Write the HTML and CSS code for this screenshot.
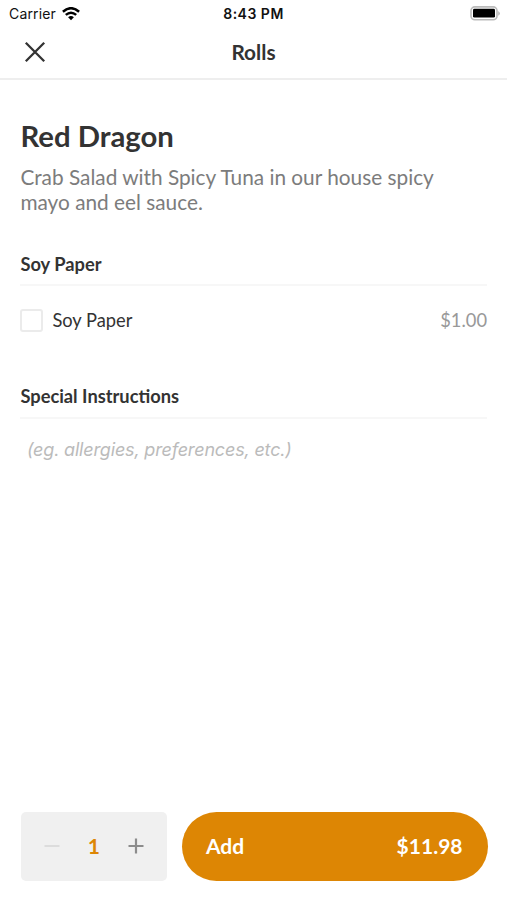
FILE: index.html
```html
<!DOCTYPE html>
<html lang="en">
<head>
<meta charset="utf-8">
<title>Rolls</title>
<link rel="stylesheet" href="styles.css">
</head>
<body>
<div class="screen">
  <div class="status">
    <div class="carrier"><span>Carrier</span>
      <svg class="wifi" width="18" height="14" viewBox="0 0 18 14"><path d="M.9 4.7Q9-2.3 17.1 4.7M3.8 7.9Q9 3.5 14.2 7.9" fill="none" stroke="#000" stroke-width="2.5"/><path d="M6.1 10.3Q9 7.6 11.9 10.3L9 13.2z"/></svg>
    </div>
    <div class="time">8:43 PM</div>
    <svg class="battery" width="31" height="15" viewBox="0 0 31 15"><rect x="1" y=".9" width="26" height="12.8" rx="3.8" fill="none" stroke="#bbb" stroke-width="1.6"/><rect x="3" y="2.8" width="22" height="8.8" rx="1.4"/><path d="M28.2 5q3.4 2.4 0 4.8z" fill="#bbb"/></svg>
  </div>
  <header class="nav">
    <svg class="close" width="22" height="22" viewBox="0 0 22 22"><path d="M1.8 1.8L20.2 20.2M20.2 1.8L1.8 20.2" stroke="#333" stroke-width="2.3" fill="none"/></svg>
    <h1>Rolls</h1>
  </header>
  <main>
    <h2>Red Dragon</h2>
    <p class="desc">Crab Salad with Spicy Tuna in our house spicy<br>mayo and eel sauce.</p>
    <h3 class="paper">Soy Paper</h3>
    <label class="option"><span class="box"></span><span class="name">Soy Paper</span><span class="price">$1.00</span></label>
    <h3 class="special">Special Instructions</h3>
    <div class="note">(eg. allergies, preferences, etc.)</div>
  </main>
  <footer>
    <div class="stepper">
      <svg width="16" height="16" viewBox="0 0 16 16"><path d="M.5 8H15.5" stroke="#dcdcdc" stroke-width="2"/></svg>
      <span class="qty">1</span>
      <svg width="16" height="16" viewBox="0 0 16 16"><path d="M.5 8H15.5M8 .5V15.5" stroke="#8c8c8c" stroke-width="2.2"/></svg>
    </div>
    <div class="add"><span>Add</span><span>$11.98</span></div>
  </footer>
</div>
</body>
</html>
```
FILE: styles.css
```css
* { box-sizing: border-box; }
body { margin: 0; background: #fff; color: #333; font-family: Lato, sans-serif; }
h1, h2, h3, p { margin: 0; }
.screen { width: 507px; height: 900px; display: flex; flex-direction: column; overflow: hidden; }
.status { height: 27px; display: grid; grid-template-columns: 1fr auto 1fr; padding: 0 6px 0 9px; align-items: center; font-family: Inter, sans-serif; color: #111; font-size: 14px; }
.carrier { display: flex; align-items: center; gap: 6px; letter-spacing: .15px; }
.time { font-weight: 600; letter-spacing: .5px; margin-right: 3px; }
.battery { justify-self: end; }
.nav { height: 53px; border-bottom: 2px solid #eee; display: grid; grid-template-columns: 1fr auto 1fr; align-items: center; padding: 0 24px 2px; }
h1 { font-size: 20.8px; font-weight: 700; line-height: 24px; }
main { flex: 1; padding: 38px 20px 0 20.4px; }
h2 { font-size: 29.3px; line-height: 36px; }
.desc { font-size: 20.8px; line-height: 25px; color: #7c7c7c; margin-top: 10px; white-space: nowrap; }
h3 { font-size: 18.3px; line-height: 22px; border-bottom: 2px solid #f7f7f7; }
.paper { margin-top: 39px; height: 33px; }
.option { display: flex; align-items: center; height: 68px; font-size: 18.3px; line-height: 22px; }
.box { width: 23px; height: 23px; border: 2px solid #ebebeb; border-radius: 3px; margin-right: 9px; }
.price { margin-left: auto; color: #999; }
.special { margin-top: 31px; height: 34px; }
.note { font-family: Inter, sans-serif; font-size: 18px; font-style: italic; letter-spacing: -.17px; color: #bbb; line-height: 22px; margin: 20px 0 0 6.5px; }
footer { height: 107px; padding: 19px 19px 19px 20.5px; display: flex; gap: 15px; }
.stepper { width: 146.5px; height: 69px; background: #f0f0f0; border-radius: 5px; display: flex; align-items: center; justify-content: space-between; padding: 0 23px 1px; }
.qty { color: #dd8604; font-size: 21px; font-weight: 700; padding-bottom: 1px; }
.add { flex: 1; height: 69px; border-radius: 35px; background: #dd8604; color: #fff; display: flex; align-items: center; justify-content: space-between; padding: 0 25.5px 2px 24px; font-size: 21px; font-weight: 700; }
```
